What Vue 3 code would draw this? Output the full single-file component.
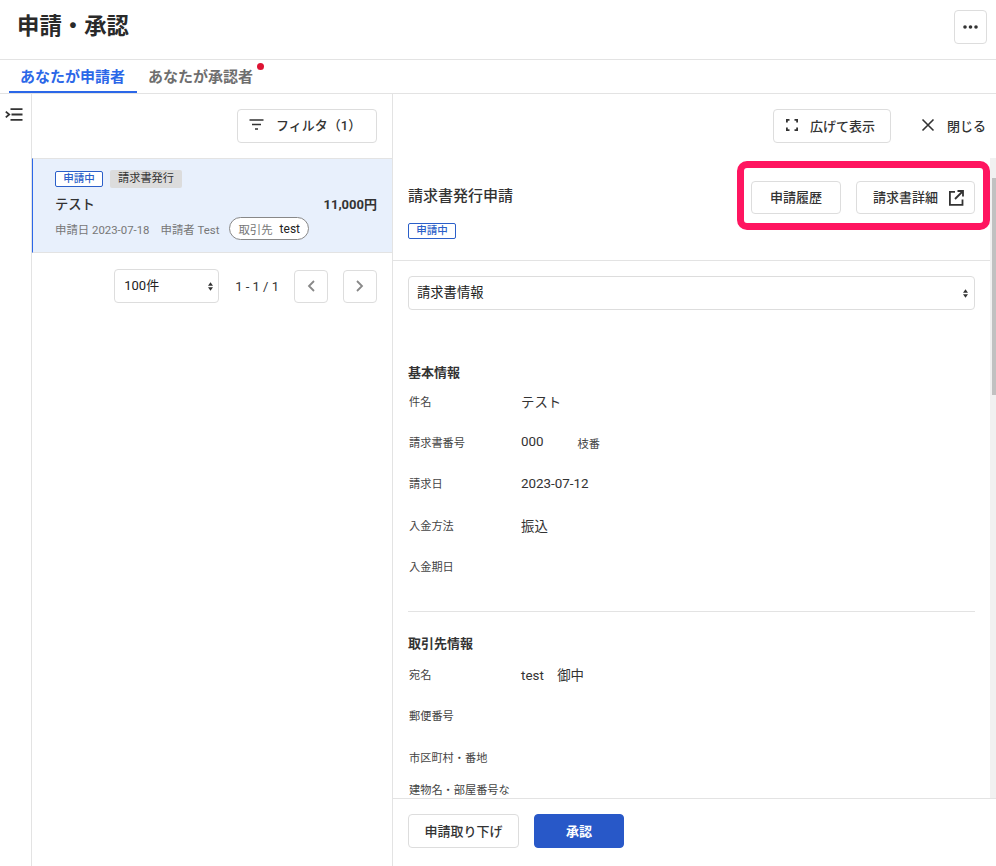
<script setup>
const basicRows = [
  { label: '件名', value: 'テスト' },
  { label: '請求書番号', value: '000', extra: '枝番' },
  { label: '請求日', value: '2023-07-12' },
  { label: '入金方法', value: '振込' },
  { label: '入金期日', value: '' },
]
const clientRows = [
  { label: '宛名', value: 'test　御中' },
  { label: '郵便番号', value: '' },
  { label: '市区町村・番地', value: '' },
  { label: '建物名・部屋番号など', value: '', tall: true },
]
</script>

<template>
  <div class="page">
    <header class="page-header">
      <h1 class="page-title">申請・承認</h1>
      <button class="btn more-btn" aria-label="メニュー">
        <svg width="15" height="4" viewBox="0 0 15 4"><circle cx="2" cy="2" r="1.8" /><circle cx="7.5" cy="2" r="1.8" /><circle cx="13" cy="2" r="1.8" /></svg>
      </button>
    </header>

    <nav class="tabs">
      <span class="tab active">あなたが申請者</span>
      <span class="tab">あなたが承認者<i class="dot"></i></span>
    </nav>

    <div class="body">
      <aside class="rail">
        <svg width="18" height="14" viewBox="0 0 18 14" fill="none" stroke="#333" stroke-width="1.8">
          <path d="M.8 3.6 4.2 6.5.8 9.4" />
          <path d="M5.5 1.2h12M6.5 6.5h11M5.5 11.8h12" />
        </svg>
      </aside>

      <section class="list-pane">
        <div class="list-toolbar">
          <button class="btn filter-btn">
            <svg width="15" height="11" viewBox="0 0 15 11" fill="none" stroke="#333" stroke-width="1.7">
              <path d="M.5 1h14M3 5.5h9M6 10h3" />
            </svg>
            <span>フィルタ（1）</span>
          </button>
        </div>

        <div class="item">
          <div class="item-tags">
            <span class="status">申請中</span>
            <span class="kind">請求書発行</span>
          </div>
          <div class="item-main">
            <span class="item-name">テスト</span>
            <span class="item-price">11,000円</span>
          </div>
          <div class="item-meta">
            <span>申請日 2023-07-18</span>
            <span>申請者 Test</span>
            <span class="client-pill">取引先<b>test</b></span>
          </div>
        </div>

        <div class="pager">
          <div class="select per-page">
            <span>100件</span>
            <svg width="5" height="9" viewBox="0 0 6 10"><path d="M3 0 6 4H0zM3 10 0 6h6z" fill="#333" /></svg>
          </div>
          <span class="pager-count">1 - 1 / 1</span>
          <button class="btn page-btn" aria-label="前へ">
            <svg width="8" height="12" viewBox="0 0 8 12" fill="none" stroke="#888" stroke-width="1.8"><path d="M7 1 2 6l5 5" /></svg>
          </button>
          <button class="btn page-btn" aria-label="次へ">
            <svg width="8" height="12" viewBox="0 0 8 12" fill="none" stroke="#888" stroke-width="1.8"><path d="m1 1 5 5-5 5" /></svg>
          </button>
        </div>
      </section>

      <section class="detail-pane">
        <div class="detail-toolbar">
          <button class="btn expand-btn">
            <svg width="12" height="12" viewBox="0 0 12 12" fill="none" stroke="#333" stroke-width="1.8">
              <path d="M.9 3.5V.9h2.6M8.5.9h2.6v2.6M11.1 8.5v2.6H8.5M3.5 11.1H.9V8.5" />
            </svg>
            <span>広げて表示</span>
          </button>
          <button class="close-btn">
            <svg width="14" height="14" viewBox="0 0 14 14" fill="none" stroke="#333" stroke-width="1.6"><path d="m1.5 1.5 11 11M12.5 1.5l-11 11" /></svg>
            <span>閉じる</span>
          </button>
        </div>

        <div class="detail-scroll">
          <div class="detail-content">
            <div class="detail-head">
              <div class="detail-head-left">
                <h2 class="detail-title">請求書発行申請</h2>
                <span class="status">申請中</span>
              </div>
              <div class="detail-actions">
                <button class="btn action-btn history-btn">申請履歴</button>
                <button class="btn action-btn invoice-btn">
                  <span>請求書詳細</span>
                  <svg width="16" height="16" viewBox="0 0 16 16" fill="none" stroke="#333" stroke-width="1.8">
                    <path d="M7 1.9H1.9v13h12.6V9.5" />
                    <path d="M9.5 1h5.5v5.5M15 1 7 9" />
                  </svg>
                </button>
              </div>
              <div class="highlight"></div>
            </div>

            <div class="detail-form">
              <div class="select section-select">
                <span>請求書情報</span>
                <svg width="5" height="9" viewBox="0 0 6 10"><path d="M3 0 6 4H0zM3 10 0 6h6z" fill="#333" /></svg>
              </div>

              <h3 class="section-title first">基本情報</h3>
              <div v-for="row in basicRows" :key="row.label" class="row">
                <span class="row-label">{{ row.label }}</span>
                <span class="row-value">{{ row.value }}</span>
                <span v-if="row.extra" class="row-extra">{{ row.extra }}</span>
              </div>

              <hr class="divider" />

              <h3 class="section-title client-title">取引先情報</h3>
              <div v-for="row in clientRows" :key="row.label" class="row" :class="{ tall: row.tall }">
                <span class="row-label">{{ row.label }}</span>
                <span class="row-value">{{ row.value }}</span>
              </div>
            </div>
          </div>
          <div class="scrollbar"><div class="scrollbar-thumb"></div></div>
        </div>

        <footer class="detail-footer">
          <button class="btn withdraw-btn">申請取り下げ</button>
          <button class="btn approve-btn">承認</button>
        </footer>
      </section>
    </div>
  </div>
</template>

<style>
html,
body {
  margin: 0;
  background: #fff;
}
</style>

<style scoped>
.page {
  width: 996px;
  height: 866px;
  display: flex;
  flex-direction: column;
  overflow: hidden;
  color: #333;
  font-family: Roboto, "Noto Sans CJK JP", sans-serif;
  font-size: 12px;
}
button {
  font-family: inherit;
}
.btn {
  display: flex;
  align-items: center;
  justify-content: center;
  box-sizing: border-box;
  padding: 0 0 2px;
  background: #fff;
  border: 1px solid #ddd;
  border-radius: 4px;
  color: #333;
  font-weight: 500;
  font-size: 13px;
}
.page-header {
  height: 59px;
  flex: none;
  display: flex;
  align-items: center;
  justify-content: space-between;
  padding: 0 9px 0 17px;
  border-bottom: 1px solid #e3e3e3;
}
.page-title {
  margin: 0 0 7px;
  font-size: 22.4px;
  font-weight: 700;
  line-height: 1.2;
  color: #2a2a2a;
}
.more-btn {
  width: 33px;
  height: 34px;
  padding: 0;
  margin-bottom: 6px;
}
.more-btn svg {
  fill: #333;
}
.tabs {
  height: 33px;
  flex: none;
  display: flex;
  padding-left: 9px;
  border-bottom: 1px solid #e3e3e3;
}
.tab {
  position: relative;
  padding: 0 11px;
  font-size: 15px;
  font-weight: 700;
  line-height: 34px;
  color: #6e6e6e;
}
.tab.active {
  padding-right: 12px;
  color: #2b67e8;
  box-shadow: inset 0 -2px 0 #2b67e8;
}
.dot {
  position: absolute;
  top: 3px;
  right: 0;
  width: 7px;
  height: 7px;
  border-radius: 50%;
  background: #dd1433;
}
.body {
  flex: 1;
  min-height: 0;
  display: flex;
}
.rail {
  width: 26px;
  flex: none;
  border-right: 1px solid #e3e3e3;
  padding: 14px 0 0 5px;
}
.rail svg {
  display: block;
}
.list-pane {
  width: 360px;
  flex: none;
  border-right: 1px solid #e3e3e3;
}
.list-toolbar {
  height: 64px;
  display: flex;
  justify-content: flex-end;
  padding: 15px 15px 0 0;
  box-sizing: border-box;
}
.filter-btn {
  width: 140px;
  height: 34px;
  gap: 12px;
  justify-content: flex-start;
  padding: 0 0 3px 11px;
}
.item {
  height: 95px;
  box-sizing: border-box;
  padding: 11px 15px 0 22px;
  background: #e8f0fc;
  border-top: 1px solid #e3e3e3;
  border-bottom: 1px solid #e3e3e3;
  border-left: 1px solid #2b67e8;
}
.item-tags {
  display: flex;
  align-items: center;
  gap: 7px;
}
.status {
  display: inline-block;
  box-sizing: border-box;
  width: 48px;
  height: 16px;
  border: 1px solid #2b5fc9;
  border-radius: 2px;
  background: #fff;
  color: #2b5fc9;
  font-size: 10.5px;
  font-weight: 500;
  line-height: 14px;
  text-align: center;
}
.kind {
  height: 18px;
  padding: 0 8px;
  border-radius: 2px;
  background: #dcdcdc;
  font-size: 11.2px;
  line-height: 18px;
  color: #333;
}
.item-main {
  display: flex;
  justify-content: space-between;
  align-items: center;
  margin-top: 5px;
  height: 20px;
}
.item-name {
  font-size: 13.3px;
  font-weight: 500;
}
.item-price {
  font-size: 13px;
  font-weight: 700;
}
.item-meta {
  display: flex;
  align-items: center;
  gap: 11px;
  margin-top: 4px;
  font-size: 11.4px;
  color: #777;
}
.client-pill {
  display: inline-flex;
  align-items: center;
  gap: 7px;
  height: 23px;
  box-sizing: border-box;
  margin-left: -1px;
  padding: 0 8px;
  border: 1px solid #888;
  border-radius: 12px;
  background: #fff;
}
.client-pill b {
  font-weight: 400;
  font-size: 12px;
  color: #222;
}
.pager {
  display: flex;
  align-items: center;
  justify-content: flex-end;
  padding: 16px 15px 0 0;
}
.select {
  display: flex;
  align-items: center;
  justify-content: space-between;
  box-sizing: border-box;
  height: 34px;
  border: 1px solid #ddd;
  border-radius: 4px;
  background: #fff;
  color: #222;
}
.select span {
  padding-bottom: 3px;
}
.per-page {
  width: 105px;
  padding: 0 5px 0 9px;
  font-size: 13px;
}
.pager-count {
  margin: 0 15px 0 16px;
  font-size: 13px;
}
.page-btn {
  width: 34px;
  height: 33px;
  margin-left: 15px;
  padding: 0;
}
.pager-count + .page-btn {
  margin-left: 0;
}
.detail-pane {
  flex: 1;
  min-width: 0;
  display: flex;
  flex-direction: column;
}
.detail-toolbar {
  height: 64px;
  flex: none;
  display: flex;
  justify-content: flex-end;
  padding: 15px 10px 0 0;
  box-sizing: border-box;
  gap: 30px;
}
.expand-btn {
  width: 118px;
  height: 34px;
  gap: 12px;
  justify-content: flex-start;
  padding-left: 12px;
}
.close-btn {
  display: flex;
  align-items: center;
  height: 34px;
  gap: 12px;
  padding: 0 0 2px;
  border: 0;
  background: none;
  color: #333;
  font-size: 13px;
  font-weight: 500;
}
.detail-scroll {
  flex: 1;
  min-height: 0;
  display: flex;
  overflow: hidden;
}
.detail-content {
  flex: 1;
  min-width: 0;
}
.detail-head {
  position: relative;
  height: 103px;
  display: flex;
  justify-content: space-between;
  box-sizing: border-box;
  padding: 23px 15px 0 15px;
  border-bottom: 1px solid #e3e3e3;
}
.detail-title {
  margin: 4px 0 16px;
  font-size: 15px;
  font-weight: 500;
  line-height: 22px;
  color: #333;
}
.detail-head-left .status {
  display: block;
}
.detail-actions {
  display: flex;
  gap: 15px;
}
.action-btn {
  height: 33px;
}
.history-btn {
  width: 90px;
}
.invoice-btn {
  width: 119px;
  gap: 10px;
  justify-content: flex-start;
  padding-left: 16px;
}
.invoice-btn svg {
  margin-top: 2px;
}
.highlight {
  position: absolute;
  top: 3px;
  right: 0;
  width: 253px;
  height: 69px;
  box-sizing: border-box;
  border: 7px solid #ff1560;
  border-radius: 10px;
  pointer-events: none;
}
.detail-form {
  padding: 15px 15px 0 15px;
}
.section-select {
  height: 34px;
  padding: 0 6px 0 8px;
  font-size: 13.3px;
}
.section-title {
  margin: 0;
  font-size: 13px;
  font-weight: 700;
  line-height: 18px;
  color: #333;
}
.section-title.first {
  margin-top: 54px;
}
.section-title.client-title {
  margin-bottom: 2px;
}
.row {
  display: flex;
  align-items: center;
  height: 41.3px;
  margin-top: -2px;
  margin-bottom: 2px;
}
.row.tall {
  align-items: flex-start;
  margin-top: 6px;
}
.row-label {
  width: 102px;
  margin-right: 10px;
  padding: 4px 0 0 1px;
  flex: none;
  font-size: 11.2px;
  line-height: 16px;
  color: #444;
}
.row.tall .row-label {
  padding-top: 0;
}
.row-value {
  font-size: 13.4px;
  color: #333;
}
.row-extra {
  margin-left: 34px;
  padding-top: 2px;
  font-size: 11.2px;
  color: #444;
}
.divider {
  margin: 25px 0 23px;
  border: 0;
  border-top: 1px solid #e3e3e3;
}
.scrollbar {
  width: 4px;
  padding: 20px 0 0 2px;
  flex: none;
  background: #f1f1f1;
}
.scrollbar-thumb {
  height: 217px;
  background: #c1c1c1;
}
.detail-footer {
  height: 68px;
  flex: none;
  display: flex;
  gap: 15px;
  padding: 15px 0 0 15px;
  box-sizing: border-box;
  border-top: 1px solid #e3e3e3;
}
.withdraw-btn {
  width: 111px;
  height: 34px;
}
.approve-btn {
  width: 90px;
  height: 34px;
  background: #2858c8;
  border-color: #2858c8;
  color: #fff;
  font-weight: 700;
}
</style>
